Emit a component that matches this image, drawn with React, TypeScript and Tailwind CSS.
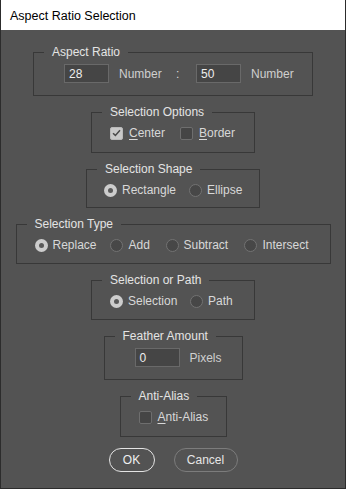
import type { ReactNode } from 'react';

const FONT = '"Liberation Sans", Arial, sans-serif';

// One bordered group with its caption cut into the top line
function Group({
  title,
  width,
  pl,
  children,
}: {
  title: string;
  width: string;
  pl: string;
  children: ReactNode;
}) {
  return (
    <fieldset className={`${width} mx-auto border border-[#383838] text-[12px] leading-4`}>
      <legend className="ml-[10px] px-2 text-[#e4e4e4]">{title}</legend>
      <div className={pl}>{children}</div>
    </fieldset>
  );
}

function Checkbox({ checked }: { checked: boolean }) {
  return checked ? (
    <span className="flex h-[13px] w-[13px] items-center justify-center rounded-[2px] border border-[#b9b9b9] bg-[#c9c9c9]">
      <svg width="9" height="8" viewBox="0 0 9 8" fill="none">
        <path d="M1 4.2 L3.4 6.4 L8 1.2" stroke="#4a4a4a" strokeWidth="1.5" />
      </svg>
    </span>
  ) : (
    <span className="h-[13px] w-[13px] rounded-[2px] border border-[#6e6e6e] bg-[#454545]" />
  );
}

function Radio({ checked }: { checked: boolean }) {
  return checked ? (
    <span className="flex h-[13px] w-[13px] items-center justify-center rounded-full bg-[#cdcdcd]">
      <span className="h-[5px] w-[5px] rounded-full bg-[#5a5a5a]" />
    </span>
  ) : (
    <span className="h-[13px] w-[13px] rounded-full border border-[#727272] bg-[#474747]" />
  );
}

function Field({ value }: { value: string }) {
  return (
    <div className="flex h-[19px] w-[45px] items-center border border-[#696969] bg-[#454545] pl-[4px] text-[12px] text-[#eeeeee]">
      {value}
    </div>
  );
}

export default function App() {
  return (
    <div
      className="flex h-[489px] w-[346px] flex-col border-x border-b border-[#2c2c2c] bg-[#535353]"
      style={{ fontFamily: FONT }}
    >
      {/* Title bar */}
      <div className="flex h-[30px] shrink-0 items-center bg-white pl-[9px] pt-[2px] text-[12.5px] text-black">
        Aspect Ratio Selection
      </div>

      <div className="flex flex-col gap-2 pt-[14px] text-[12px] text-[#d8d8d8]">
        <Group title="Aspect Ratio" width="w-[280px]" pl="pl-[30px]">
          <div className="mt-[4px] mb-[12px] flex h-[19px] items-center">
            <Field value="28" />
            <span className="ml-[10px] w-[57px] text-[#cfcfcf]">Number</span>
            <span className="w-[20px]">:</span>
            <Field value="50" />
            <span className="ml-[10px] text-[#cfcfcf]">Number</span>
          </div>
        </Group>

        <Group title="Selection Options" width="w-[164px]" pl="pl-[18px]">
          <div className="mt-[3px] mb-[9px] flex h-[20px] items-center">
            <div className="flex w-[70px] items-center gap-[6px]">
              <Checkbox checked />
              <span>
                <u className="underline-offset-2">C</u>enter
              </span>
            </div>
            <div className="flex items-center gap-[6px]">
              <Checkbox checked={false} />
              <span>
                <u className="underline-offset-2">B</u>order
              </span>
            </div>
          </div>
        </Group>

        <Group title="Selection Shape" width="w-[174px]" pl="pl-[17px]">
          <div className="mt-[3px] mb-[7px] flex h-[20px] items-center">
            <div className="flex w-[85px] items-center gap-[5px]">
              <Radio checked />
              <span>Rectangle</span>
            </div>
            <div className="flex items-center gap-[5px]">
              <Radio checked={false} />
              <span>Ellipse</span>
            </div>
          </div>
        </Group>

        <Group title="Selection Type" width="w-[315px]" pl="pl-[18px]">
          <div className="mt-[3px] mb-[8px] flex h-[20px] items-center">
            <div className="flex w-[75px] items-center gap-[5px]">
              <Radio checked />
              <span>Replace</span>
            </div>
            <div className="flex w-[56px] items-center gap-[6px]">
              <Radio checked={false} />
              <span>Add</span>
            </div>
            <div className="flex w-[78px] items-center gap-[5px]">
              <Radio checked={false} />
              <span>Subtract</span>
            </div>
            <div className="flex items-center gap-[6px]">
              <Radio checked={false} />
              <span>Intersect</span>
            </div>
          </div>
        </Group>

        <Group title="Selection or Path" width="w-[164px]" pl="pl-[18px]">
          <div className="mt-[3px] mb-[8px] flex h-[20px] items-center">
            <div className="flex w-[80px] items-center gap-[5px]">
              <Radio checked />
              <span>Selection</span>
            </div>
            <div className="flex items-center gap-[5px]">
              <Radio checked={false} />
              <span>Path</span>
            </div>
          </div>
        </Group>

        <Group title="Feather Amount" width="w-[139px]" pl="pl-[30px]">
          <div className="mt-[4px] mb-[12px] flex h-[19px] items-center">
            <Field value="0" />
            <span className="ml-[10px] text-[#cfcfcf]">Pixels</span>
          </div>
        </Group>

        <Group title="Anti-Alias" width="w-[107px]" pl="pl-[18px]">
          <div className="mt-[3px] mb-[9px] flex h-[20px] items-center gap-[6px]">
            <Checkbox checked={false} />
            <span>
              <u className="underline-offset-2">A</u>nti-Alias
            </span>
          </div>
        </Group>

        {/* Buttons */}
        <div className="mt-[3px] flex justify-center gap-[19px]">
          <button className="flex h-[24px] w-[46px] items-center justify-center rounded-full border-[1.5px] border-[#e4e4e4] text-[12px] text-[#f0f0f0]">
            OK
          </button>
          <button className="flex h-[24px] w-[64px] items-center justify-center rounded-full border-[1.5px] border-[#7c7c7c] text-[12px] text-[#e6e6e6]">
            Cancel
          </button>
        </div>
      </div>
    </div>
  );
}
